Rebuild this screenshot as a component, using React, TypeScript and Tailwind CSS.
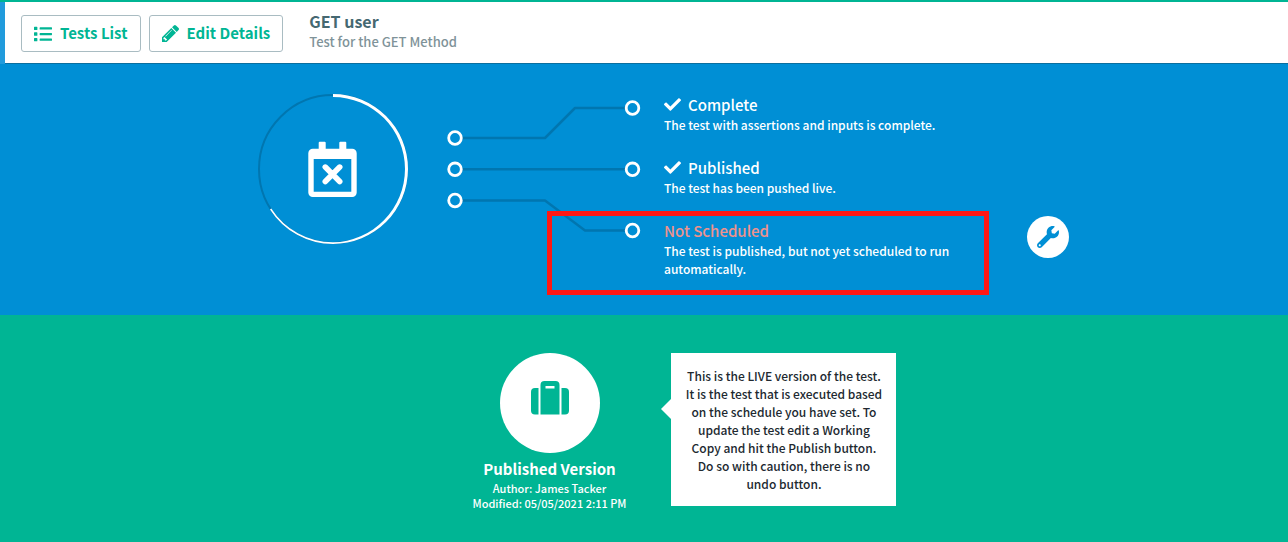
import React from "react";
import { FaCheck, FaList, FaWrench } from "react-icons/fa";

function Pencil() {
  return (
    <svg className="size-[17px]" viewBox="128 149 1515 1515" fill="currentColor" aria-hidden="true">
      <path d="M491 1536l91-91-235-235-91 91v107h128v128h107zm523-928q0-22-22-22-10 0-17 7l-542 542q-7 7-7 17 0 22 22 22 10 0 17-7l542-542q7-7 7-17zm-54-192l416 416-832 832h-416v-416zm683 96q0 53-37 90l-166 166-416-416 166-165q36-38 90-38 53 0 91 38l235 234q37 39 37 91z" />
    </svg>
  );
}

function ProgressRing() {
  return (
    <svg className="mt-px size-[150px] shrink-0" viewBox="0 0 150 150" aria-hidden="true">
      <circle cx="75" cy="75" r="74" fill="none" stroke="#0076b0" strokeWidth="2" />
      <path
        fill="#fff"
        d="M75 0A75 75 0 0 1 150 75A75 75 0 0 1 75 150A75 75 0 0 1 12 115.500L13.300 114.500A73.500 73.500 0 0 0 75 148.300A73.500 73.500 0 0 0 147 75A72 72 0 0 0 75 3Z"
      />
      <path
        fill="#fff"
        fillRule="evenodd"
        d="M60.700 48.700a1 1 0 0 1 1-1h5a1 1 0 0 1 1 1V54.700h13.600v-6a1 1 0 0 1 1-1h5a1 1 0 0 1 1 1V54.700h5.900a4.500 4.500 0 0 1 4.500 4.500v39.300a4.500 4.500 0 0 1-4.500 4.500H54.800a4.500 4.500 0 0 1-4.500-4.500V59.200a4.500 4.500 0 0 1 4.500-4.500H60.700ZM55.700 65v32.700h37.600V65Z"
      />
      <path d="M67.300 73.100l14.400 14.400M81.700 73.100L67.300 87.500" stroke="#fff" strokeWidth="5.600" strokeLinecap="round" />
    </svg>
  );
}

function Connectors() {
  return (
    <svg className="h-[140px] w-[194px] shrink-0" viewBox="0 0 194 140" fill="none" aria-hidden="true">
      <g stroke="#0076b0" strokeWidth="2.500" strokeLinejoin="round">
        <path d="M15 39H98L128 9H179" />
        <path d="M15 70.300H179" />
        <path d="M15 101.500H98L138 131.500H179" />
      </g>
      <g stroke="#fff" strokeWidth="2.800">
        <circle cx="8" cy="39" r="6.300" />
        <circle cx="8" cy="70.300" r="6.300" />
        <circle cx="8" cy="101.500" r="6.300" />
        <circle cx="185.500" cy="9" r="6.300" />
        <circle cx="185.500" cy="70.300" r="6.300" />
        <circle cx="185.500" cy="131.500" r="6.300" />
      </g>
    </svg>
  );
}

function Suitcase() {
  return (
    <svg className="h-[34px] w-[38px]" viewBox="0 0 38 34" aria-hidden="true">
      <g fill="#00b594">
        <path d="M7.500 7v26.500H4a4 4 0 0 1-4-4V11a4 4 0 0 1 4-4Z" />
        <path d="M30.500 7v26.500H34a4 4 0 0 0 4-4V11a4 4 0 0 0-4-4Z" />
        <path
          fillRule="evenodd"
          d="M9.500 33.500V4a4 4 0 0 1 4-4h11a4 4 0 0 1 4 4v29.500ZM14.500 5v2.500h9V5Z"
        />
      </g>
    </svg>
  );
}

const steps = [
  { title: "Complete", done: true, text: "The test with assertions and inputs is complete." },
  { title: "Published", done: true, text: "The test has been pushed live." },
  {
    title: "Not Scheduled",
    done: false,
    text: "The test is published, but not yet scheduled to run automatically.",
  },
];

const toolButton =
  "flex h-[37px] items-center gap-2 rounded-[3px] border border-[#a9bcc2] bg-white px-3 text-[15px] font-bold text-[#00b594]";

export default function App() {
  return (
    <div className="min-h-screen bg-[#00b594] font-['Noto_Sans_CJK_SC',sans-serif] text-white">
      <header className="border-t-2 border-t-[#00b594] bg-[#219bdc] pl-[5px]">
        <div className="flex items-start border-b border-b-[#0b6f9f] bg-white pt-[13px] pb-[11px] pl-4">
          <nav className="flex gap-2">
            <button type="button" className={toolButton}>
              <FaList className="size-[18px]" />
              Tests List
            </button>
            <button type="button" className={toolButton}>
              <Pencil />
              Edit Details
            </button>
          </nav>
          <div className="-mt-[5px] -mb-1 ml-[26px]">
            <h1 className="text-base leading-[22px] font-bold text-[#456871]">GET user</h1>
            <p className="text-[13px] leading-5 font-medium text-[#7f9399]">Test for the GET Method</p>
          </div>
        </div>
      </header>

      <section className="flex min-h-[251px] items-start justify-center bg-[#008fd5] pt-[29px] pl-[39px]">
        <ProgressRing />
        <div className="ml-[39px] pt-[6px]">
          <Connectors />
        </div>
        <ol className="ml-[23px] flex w-[300px] flex-col gap-[22px]">
          {steps.map((step) => (
            <li key={step.title} className="relative">
              <h2
                className={
                  step.done
                    ? "flex items-center gap-[7px] text-[15px] leading-[23px] font-medium"
                    : "text-[15px] leading-[23px] font-medium text-[#f0928c]"
                }
              >
                {step.done && <FaCheck className="size-[17px]" />}
                {step.title}
              </h2>
              <p className="text-xs leading-[18px] font-medium">{step.text}</p>
              {!step.done && (
                <div className="pointer-events-none absolute -top-2 -left-[117px] h-[84px] w-[442px] border-[5px] border-[#ff1814]" />
              )}
            </li>
          ))}
        </ol>
        <button
          type="button"
          aria-label="Configure schedule"
          className="mt-[123px] ml-[63px] flex size-[42px] items-center justify-center rounded-full bg-white text-[#008fd5]"
        >
          <FaWrench className="size-[22px]" />
        </button>
      </section>

      <section className="flex items-start justify-center gap-[45px] pt-[38px] pb-9 pl-[81px]">
        <div className="flex flex-col items-center text-center">
          <div className="flex size-[100px] items-center justify-center rounded-full bg-white pb-[10px]">
            <Suitcase />
          </div>
          <h2 className="mt-1 text-[15px] leading-6 font-bold">Published Version</h2>
          <p className="text-[11px] leading-[15px] font-medium">Author: James Tacker</p>
          <p className="text-[11px] leading-[15px] font-medium">Modified: 05/05/2021 2:11 PM</p>
        </div>
        <div className="relative w-[225px] bg-white px-3 pt-[14px] pb-[13px] text-center text-xs leading-[18px] font-medium text-[#212930]">
          <svg className="absolute top-[45px] -left-[10px] h-[22px] w-[11px]" viewBox="0 0 11 22" aria-hidden="true">
            <path d="M11 0V22L0 11Z" fill="#fff" />
          </svg>
          <p>
            This is the LIVE version of the test. It is the test that is executed based on the schedule you have set.
            To update the test edit a Working Copy and hit the Publish button. Do so with caution, there is no undo
            button.
          </p>
        </div>
      </section>
    </div>
  );
}
